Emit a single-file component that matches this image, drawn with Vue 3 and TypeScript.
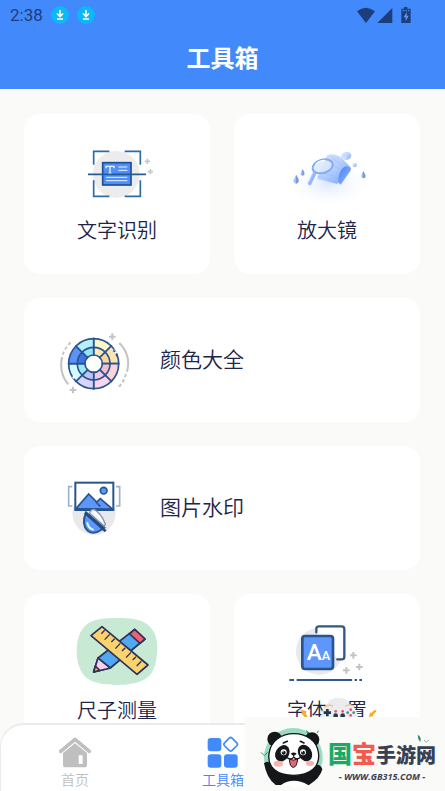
<script setup lang="ts">
import { ref } from 'vue'

type Tab = 'home' | 'tools'

const active = ref<Tab>('tools')
const sectors = Array.from({ length: 8 }, (_, i) => i * 45)
const sectorColors = ['#fdf6c9', '#fde3b0', '#fbd3d6', '#f9d6ee', '#d9d4fa', '#d3fbff', '#5b93fb', '#b4f1fb']
const innerColors = ['#fdeab8', '#fbd59c', '#f3bfca', '#f7c6e4', '#bfc4f4', '#9fe8f7', '#3f74e0', '#93e4f5']

function sector(index: number, inner: number, outer: number): string {
  const from = (index * 45 * Math.PI) / 180
  const to = ((index + 1) * 45 * Math.PI) / 180
  const point = (r: number, a: number) => `${(131 + r * Math.sin(a)).toFixed(1)} ${(131 - r * Math.cos(a)).toFixed(1)}`
  return `M${point(inner, from)}L${point(outer, from)}A${outer} ${outer} 0 0 1 ${point(outer, to)}L${point(inner, to)}A${inner} ${inner} 0 0 0 ${point(inner, from)}Z`
}
</script>

<template>
  <div class="screen">
    <header class="top">
      <div class="status">
        <span class="clock">2:38</span>
        <svg v-for="n in 2" :key="n" class="download" viewBox="0 0 18 18" aria-hidden="true">
          <circle cx="9" cy="9" r="9" fill="#0cb8fb" />
          <path d="M9 4v6M6 7.500l3 3 3-3M6 13h6" fill="none" stroke="#fff" stroke-width="1.600" />
        </svg>
        <svg class="signals" viewBox="0 0 162 48" aria-hidden="true">
          <g fill="#1c3e7c">
            <path d="M0 13Q26-8 54 13L27 48Z" />
            <path d="M106 3V48H61Z" />
            <path d="M133 5h8V0h10v5h10v43h-28Z" />
          </g>
          <path d="M149 15l-9 16h6v12l9-17h-6Z" fill="#5f97ee" />
          <path d="M137 11h20" stroke="#5f97ee" stroke-width="3" stroke-dasharray="5 3" />
        </svg>
      </div>
      <h1 class="title">工具箱</h1>
    </header>

    <main class="tools">
      <button type="button" class="card">
        <svg class="icon" viewBox="-9 24 300 216" aria-hidden="true">
          <circle cx="139" cy="133" r="70" fill="#ececec" />
          <path d="M71 104V64H118M164 64H211V104M71 151V199H118M164 199H211V151" fill="none" stroke="#2a6da5" stroke-width="5" />
          <rect x="98" y="98" width="85" height="67" fill="#4f8ffb" stroke="#214f8f" stroke-width="5" />
          <path d="M108 115v-6h24v6M120 109v21M115 130h10" fill="none" stroke="#eef5ff" stroke-width="4" />
          <path d="M145 111h27M145 121h27M108 142h64M108 152h64" fill="none" stroke="#eef5ff" stroke-width="3" />
          <path d="M54 133H228" stroke="#245c96" stroke-width="5" />
          <path d="M232 86v16M224 94h16M241 117v16M233 125h16" stroke="#c7c7c7" stroke-width="5" />
        </svg>
        <span class="label">文字识别</span>
      </button>

      <button type="button" class="card">
        <svg class="icon" viewBox="-9 24 300 216" aria-hidden="true">
          <defs>
            <radialGradient id="glow"><stop offset="0" stop-color="#dce8ff" /><stop offset="1" stop-color="#fff" stop-opacity="0" /></radialGradient>
            <linearGradient id="map" x1="0" y1="0" x2="1" y2="1"><stop stop-color="#e1ebff" /><stop offset=".5" stop-color="#b3cdff" /><stop offset="1" stop-color="#709fff" /></linearGradient>
            <linearGradient id="fold" x1="0" y1="0" x2="1" y2="1"><stop stop-color="#427cf6" /><stop offset="1" stop-color="#9fc0ff" /></linearGradient>
            <linearGradient id="bubble" x1="0" y1="0" x2="1" y2="1"><stop stop-color="#eef4ff" /><stop offset="1" stop-color="#8db2f8" /></linearGradient>
          </defs>
          <ellipse cx="145" cy="160" rx="130" ry="75" fill="url(#glow)" />
          <path d="M140 77Q160 66 188 86L211 110Q195 107 184 126L172 162L111 147Z" fill="url(#map)" />
          <path d="M139 91l45 31M151 79l40 32M112 138l58 15M125 127l48 14" stroke="#9dbcfb" stroke-width="2" />
          <path d="M174 157Q178 110 202 109Q218 111 211 123L182 164Z" fill="url(#fold)" />
          <ellipse cx="128" cy="109" rx="31" ry="20" transform="rotate(-16 128 109)" fill="#dce9ff" fill-opacity=".85" stroke="#82aafa" stroke-width="6" />
          <path d="M103 132L89 160" stroke="#93b7fc" stroke-width="11" stroke-linecap="round" />
          <path d="M99 129L86 157" stroke="#bdd3ff" stroke-width="3" stroke-linecap="round" />
          <path d="M107 105q8-14 28-14" fill="none" stroke="#fff" stroke-width="4" />
          <ellipse cx="199" cy="77" rx="15" ry="12" fill="url(#bubble)" />
          <ellipse cx="190" cy="83" rx="11" ry="5" fill="#cfdfff" />
          <circle cx="224" cy="105" r="7" fill="url(#bubble)" />
          <path d="M48 134q12 18 6 24q-10 8-14-5ZM67 117q9 12 5 18q-7 6-11-3ZM249 123q11 14 6 20q-8 6-12-4Z" fill="#a8c1f2" />
          <path d="M48 134q12 18 6 24l-6 3ZM67 117q9 12 5 18l-5 2ZM249 123q11 14 6 20l-6 2Z" fill="#7599e4" />
        </svg>
        <span class="label">放大镜</span>
      </button>

      <button type="button" class="card wide">
        <svg class="icon tall" viewBox="0 -15 300 270" aria-hidden="true">
          <g stroke="#28558f" stroke-width="5">
            <path v-for="(angle, i) in sectors" :key="angle" :d="sector(i, 45, 75)" :fill="sectorColors[i]" />
            <path v-for="(angle, i) in sectors" :key="`inner-${angle}`" :d="sector(i, 26, 49)" :fill="innerColors[i]" />
          </g>
          <path d="M68 174l8-5M190 90l9 10" stroke="#fff" stroke-width="7" />
          <path d="M190 91l5 5M198 103l4 6" stroke="#28558f" stroke-width="5" />
          <g fill="none" stroke="#c4c4c6" stroke-width="6">
            <path d="M55 193Q26 160 36 111M208 69Q244 105 231 155" />
            <path d="M38 104Q46 81 66 64M228 162Q222 184 204 204" stroke-dasharray="10 7" />
            <path d="M187 40v20M177 50h20M69 200v20M59 210h20" />
          </g>
        </svg>
        <span class="label large">颜色大全</span>
      </button>

      <button type="button" class="card wide">
        <svg class="icon tall" viewBox="0 -6 300 270" aria-hidden="true">
          <circle cx="132" cy="145" r="65" fill="#e9e9e9" />
          <path d="M67 65H56V123H67M198 65H209V123H198" fill="none" stroke="#9fb2cc" stroke-width="5" />
          <rect x="76" y="53" width="114" height="82" fill="#fff" stroke="#28558f" stroke-width="6" />
          <path d="M78 131L116 87L140 111L151 101L187 132Z" fill="#5e97fc" stroke="#28558f" stroke-width="5" />
          <path d="M138 111l13 14" stroke="#28558f" stroke-width="5" />
          <circle cx="161" cy="77" r="10" fill="#5e97fc" stroke="#28558f" stroke-width="5" />
          <path d="M108 142Q93 179 113 197Q130 211 153 195L163 188Z" fill="#5e97fc" stroke="#28558f" stroke-width="6" />
          <path d="M112 174q3 15 17 20" fill="none" stroke="#e8faff" stroke-width="6" stroke-linecap="round" />
          <path d="M119 145Q121 133 132 133Q152 143 166 176L163 184Z" fill="#f1f3f6" stroke="#8396ae" stroke-width="4" />
          <path d="M134 141Q149 153 157 170" fill="none" stroke="#fff" stroke-width="6" />
          <path d="M105 143L167 199" stroke="#234c85" stroke-width="8" />
        </svg>
        <span class="label large">图片水印</span>
      </button>

      <button type="button" class="card">
        <svg class="icon" viewBox="21 54 300 216" aria-hidden="true">
          <path d="M171 54C228 54 255 61 275 86C298 113 294 166 284 199C272 238 237 255 171 255C105 255 71 240 57 199C46 164 47 115 67 87C88 59 119 54 171 54Z" fill="#c8ead5" />
          <g stroke="#30305c" stroke-width="5" stroke-linejoin="round">
            <path d="M224 88L255 117L151 204L101 216L114 174Z" fill="#4fa9f1" />
            <path d="M224 88L255 117L240 130L209 102Z" fill="#ef6370" />
            <path d="M114 174L151 204L101 216Z" fill="#f8d4e8" />
            <path d="M106 198L119 211L101 216Z" fill="#f6ad55" />
            <path d="M93 107L126 80L264 195L231 223Z" fill="#f9d36d" />
            <path d="M134 91l-10 10M149 103l-15 16M164 116l-10 10M181 130l-15 16M196 143l-10 10M213 157l-15 16M228 170l-10 10M244 184l-14 14" fill="none" stroke-width="4" />
          </g>
        </svg>
        <span class="label">尺子测量</span>
      </button>

      <button type="button" class="card">
        <svg class="icon" viewBox="21 54 300 216" aria-hidden="true">
          <circle cx="148" cy="154" r="70" fill="#e8e9ec" />
          <path d="M139 97V86Q139 79 147 79H215Q223 79 223 88V170Q223 178 215 178H202" fill="#fff" stroke="#335786" stroke-width="7" stroke-linecap="round" />
          <rect x="97" y="108" width="92" height="99" rx="8" fill="#5e96fc" stroke="#28558f" stroke-width="8" />
          <text x="110" y="180" class="glyph" font-size="68">A<tspan font-size="38">A</tspan></text>
          <path d="M58 240h14M80 240h166M254 240h7M268 240h8" stroke="#35588a" stroke-width="6" />
          <path d="M250 156v20M240 166h20M268 191v20M258 201h20M229 201v20M219 211h20" stroke="#c2c3c6" stroke-width="6" />
        </svg>
        <span class="label">字体设置</span>
      </button>
    </main>

    <nav class="tabs">
      <button type="button" class="tab" :class="{ active: active === 'home' }" @click="active = 'home'">
        <svg class="tab-icon" viewBox="0 0 96 96" aria-hidden="true">
          <path d="M5 46L48 10L91 46" fill="none" stroke="currentColor" stroke-width="11" stroke-linecap="round" stroke-linejoin="round" />
          <path d="M48 22L84 51V86Q84 94 76 94H20Q12 94 12 86V51Z" fill="currentColor" />
          <rect x="59" y="58" width="12" height="26" rx="2" fill="#fff" />
        </svg>
        <span>首页</span>
      </button>
      <button type="button" class="tab" :class="{ active: active === 'tools' }" @click="active = 'tools'">
        <svg class="tab-icon" viewBox="0 0 96 96" aria-hidden="true">
          <g fill="currentColor">
            <rect x="2" y="6" width="41" height="40" rx="9" />
            <rect x="2" y="55" width="41" height="40" rx="9" />
            <rect x="51" y="55" width="41" height="40" rx="9" />
          </g>
          <rect x="55" y="9" width="32" height="32" rx="6" transform="rotate(45 71 25)" fill="none" stroke="currentColor" stroke-width="5" />
        </svg>
        <span>工具箱</span>
      </button>
    </nav>

    <aside class="brand">
      <svg class="gamepad" viewBox="-75 291 600 60" aria-hidden="true">
        <path d="M153 351Q156 322 172 312Q177 293 205 293Q234 293 238 312Q258 317 264 351Z" fill="#ececee" />
        <path d="M162 322Q174 312 190 318M226 318Q242 310 256 321" fill="none" stroke="#e9ca76" stroke-width="4" />
        <path d="M172 327v22M161 338h22" stroke="#26384d" stroke-width="8" />
        <g fill="#e05565"><circle cx="242" cy="329" r="4" /><circle cx="242" cy="346" r="4" /><circle cx="197" cy="334" r="4" /></g>
        <g fill="#2c9b8e"><circle cx="233" cy="338" r="4" /><circle cx="251" cy="338" r="4" /></g>
        <g fill="#26384d"><circle cx="197" cy="347" r="7" /><circle cx="218" cy="347" r="7" /></g>
        <circle cx="218" cy="334" r="4" fill="#e05565" />
        <path d="M90 328l20 6-3 5 6 12h-9l-11-12 4-3ZM314 329l6 4-11 12 1 4-13 2 3-14 4 2Z" fill="#f4ad32" />
      </svg>
      <a class="brand-link" href="#brand">
        <svg class="panda" viewBox="-30 -9 249 222" aria-hidden="true">
          <circle cx="115" cy="112" r="88" fill="#9bdcc1" />
          <path d="M153 29l13 12 8 1-5 8-11-4Z" fill="#258260" />
          <path d="M178 42l7 4M190 32l-4 7M18 97l10 10 10-10" fill="none" stroke="#388d70" stroke-width="3" />
          <path d="M27 130Q37 119 49 134L70 155H158L180 136Q196 130 202 148Q196 174 162 195H62Q35 176 27 130Z" fill="#15171a" />
          <circle cx="59" cy="57" r="22" fill="#15171a" />
          <circle cx="171" cy="59" r="22" fill="#15171a" />
          <path d="M78 195Q115 170 159 195Q116 208 78 195Z" fill="#fff" />
          <path d="M117 41C153 41 185 61 190 96C198 143 162 166 116 166C66 166 37 144 42 101C47 61 80 41 117 41Z" fill="#fff" stroke="#15171a" stroke-width="4" />
          <ellipse cx="82" cy="100" rx="20" ry="26" transform="rotate(30 82 100)" fill="#15171a" />
          <ellipse cx="150" cy="99" rx="20" ry="26" transform="rotate(-30 150 99)" fill="#15171a" />
          <g fill="#fff"><circle cx="86" cy="97" r="9" /><circle cx="144" cy="97" r="9" /></g>
          <g fill="#15171a"><circle cx="86" cy="98" r="6" /><circle cx="144" cy="98" r="6" /></g>
          <g fill="#fff"><circle cx="84" cy="95" r="2" /><circle cx="142" cy="95" r="2" /></g>
          <path d="M85 69l12-5M136 64l11 5" stroke="#15171a" stroke-width="5" stroke-linecap="round" />
          <path d="M107 101q9-7 18 0l-9 8Z" fill="#15171a" />
          <path d="M96 113q13 9 20-2q9 11 21 1" fill="none" stroke="#15171a" stroke-width="4" />
          <path d="M103 118q13 5 25-1q-3 25-13 25T103 118Z" fill="#e56a70" stroke="#15171a" stroke-width="3" />
          <g fill="#fbb0b0"><ellipse cx="70" cy="131" rx="14" ry="9" /><ellipse cx="165" cy="130" rx="12" ry="8" /></g>
        </svg>
        <span class="brand-text">
          <span class="brand-name"><b class="green">国</b><b class="red">宝</b><b class="dark">手游网</b></span>
          <span class="brand-url">- WWW.GB315.COM -</span>
        </span>
        <svg class="leaf" viewBox="0 0 42 30" aria-hidden="true">
          <path d="M5 2Q17 8 13 24Q5 16 5 2Z" fill="#278d65" />
          <path d="M24 18l7 7 8-8" fill="none" stroke="#94a8a1" stroke-width="3" />
        </svg>
      </a>
    </aside>
  </div>
</template>

<style>
body {
  background: #fafaf8;
}
</style>

<style scoped>
.screen {
  position: relative;
  display: flex;
  flex-direction: column;
  height: 100vh;
  overflow: hidden;
  font-family: Roboto, "Noto Sans CJK SC", sans-serif;
  color: #202448;
}

button {
  border: 0;
  padding: 0;
  font: inherit;
  color: inherit;
  cursor: pointer;
}

.top {
  flex: none;
  background: #4289fb;
}

.status {
  display: flex;
  align-items: center;
  gap: 8px;
  height: 30px;
  padding: 0 34px 0 10px;
}

.clock {
  font-size: 17px;
  color: #1c3e7c;
}

.download {
  width: 18px;
  height: 18px;
}

.signals {
  width: 54px;
  height: 16px;
  margin-left: auto;
}

.title {
  margin: 0;
  font-size: 24px;
  line-height: 59px;
  font-weight: 700;
  text-align: center;
  color: #fff;
}

.tools {
  flex: 1;
  min-height: 0;
  display: grid;
  grid-template-columns: 1fr 1fr;
  align-content: start;
  gap: 24px;
  padding: 25px 25px 90px 24px;
  overflow-y: auto;
  scrollbar-width: none;
}

.card {
  display: flex;
  flex-direction: column;
  align-items: center;
  gap: 6px;
  padding: 24px 0 28px;
  border-radius: 16px;
  background: #fff;
}

.wide {
  grid-column: span 2;
  flex-direction: row;
  gap: 10px;
  padding: 17px 26px;
}

.icon {
  width: 100px;
  height: 72px;
}

.tall {
  height: 90px;
}

.label {
  font-size: 20px;
  line-height: 30px;
  font-weight: 350;
}

.large {
  font-size: 21px;
}

.glyph {
  font-family: Roboto, sans-serif;
  font-weight: 500;
  fill: #fff;
}

.tabs {
  position: absolute;
  inset: auto 0 0;
  display: grid;
  grid-template-columns: repeat(3, 1fr);
  border-top: 2px solid #ebebeb;
  border-left: 1px solid #ebebeb;
  border-radius: 24px 24px 0 0;
  background: #fff;
}

.tab {
  display: flex;
  flex-direction: column;
  align-items: center;
  gap: 2px;
  padding: 11px 0 1px;
  background: none;
  font-size: 14px;
  line-height: 20px;
  font-weight: 350;
  color: #bfbfbf;
}

.active {
  color: #4289fb;
}

.tab-icon {
  width: 32px;
  height: 32px;
}

.brand {
  position: absolute;
  right: 0;
  bottom: 0;
  width: 200px;
}

.gamepad {
  display: block;
  width: 200px;
  height: 20px;
}

.brand-link {
  position: relative;
  display: flex;
  height: 74px;
  background: #fafaf9;
  text-decoration: none;
  color: #394052;
}

.panda {
  flex: none;
  width: 83px;
  height: 74px;
}

.brand-text {
  display: flex;
  flex-direction: column;
  padding-top: 20px;
  white-space: nowrap;
}

.brand-name {
  display: flex;
  align-items: baseline;
  font-family: "Noto Sans CJK SC", sans-serif;
  line-height: 32px;
}

.brand-name b {
  font-weight: 900;
}

.green {
  font-size: 24px;
  color: #18ab68;
}

.red {
  font-size: 24px;
  color: #f05b50;
}

.dark {
  font-size: 20px;
}

.brand-url {
  font-family: "Open Sans", sans-serif;
  font-size: 9px;
  line-height: 12px;
  font-weight: 700;
  font-style: italic;
  text-align: center;
}

.leaf {
  position: absolute;
  top: 17px;
  right: 15px;
  width: 14px;
  height: 10px;
}
</style>
